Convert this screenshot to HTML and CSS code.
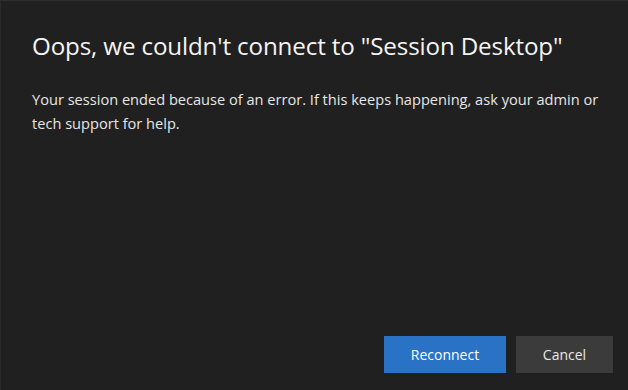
FILE: index.html
```html
<!DOCTYPE html>
<html lang="en">
<head>
    <meta charset="UTF-8">
    <title>Connection error</title>
    <link rel="stylesheet" href="styles.css">
</head>
<body>

<div class="dialog">
    <div class="content">
        <h1 class="title">Oops, we couldn't connect to "Session Desktop"</h1>
        <p class="message">Your session ended because of an error. If this keeps happening, ask your admin or tech support for help.</p>
    </div>
    <div class="actions">
        <button class="btn btn-primary">Reconnect</button>
        <button class="btn">Cancel</button>
    </div>
</div>

</body>
</html>
```
FILE: styles.css
```css
/*reset*/
*{margin: 0;padding: 0;box-sizing: border-box;}
html,body{height: 100%;}
body{background-color: #202020;font-family: "Open Sans", "Noto Sans", sans-serif;color: #fff;}
/*dialog*/
.dialog{height: 390px;width: 628px;border-top: 1px solid #2e2e2e;border-left: 1px solid #2a2a2a;display: flex;flex-direction: column;justify-content: space-between;}
.content{padding: 29px 20px 0 31px;}
.title{font-size: 24.2px;font-weight: 400;line-height: 32px;letter-spacing: -0.15px;color: #f4f4f4;}
.message{margin-top: 26px;font-size: 14.6px;line-height: 23.5px;color: #e6e6e6;letter-spacing: 0;}
/*buttons*/
.actions{display: flex;justify-content: flex-end;gap: 10px;padding: 0 15px 17px 0;}
.btn{height: 37px;width: 97px;border: none;background-color: #3b3b3b;color: #e8e8e8;font-family: inherit;font-size: 14px;}
.btn-primary{width: 122px;background-color: #2a72c6;color: #fff;}
```
